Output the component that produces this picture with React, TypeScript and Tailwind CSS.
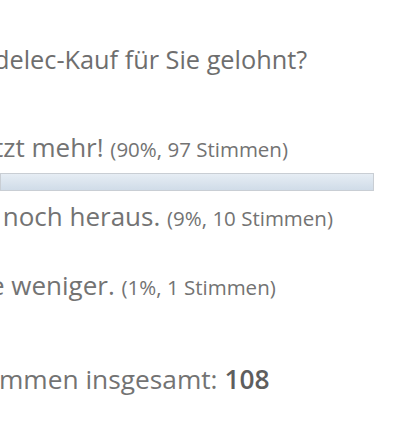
export default function App() {
  return (
    <div
      className="h-[441px] w-[410px] overflow-hidden bg-white text-[#737373]"
      style={{ fontFamily: '"Open Sans", "Noto Sans", sans-serif' }}
    >
      <div className="flex flex-col whitespace-nowrap">
        <h2 className="-ml-[6px] mt-[42px] text-[25.3px] font-medium leading-[34px] text-[#6e6e6e]">
          delec-Kauf für Sie gelohnt?
        </h2>
        <div className="-ml-[6px] mt-[53px] text-[26px] leading-[36px]">
          tzt mehr! <span className="text-[20.5px]">(90%, 97 Stimmen)</span>
        </div>
        <div className="mt-[6px] h-[18px] w-[374px] border border-[#c9ced4] bg-gradient-to-b from-[#e6edf4] to-[#d0dce8]" />
        <div className="-ml-[4px] mt-[7px] text-[26px] leading-[36px]">
          {"\u00a0"}noch heraus. <span className="text-[20.5px]">(9%, 10 Stimmen)</span>
        </div>
        <div className="-ml-[10px] mt-[31px] text-[26px] leading-[36px]">
          e weniger. <span className="text-[20.5px]">(1%, 1 Stimmen)</span>
        </div>
        <div className="-ml-[1px] mt-[56px] text-[26.3px] leading-[36px]">
          mmen insgesamt: <span className="font-semibold text-[#5e5e5e]">108</span>
        </div>
      </div>
    </div>
  );
}
